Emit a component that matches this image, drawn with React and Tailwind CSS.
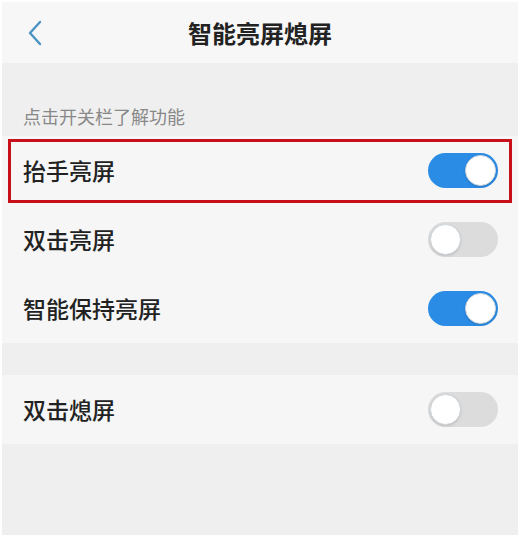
import React from 'react';

const Toggle = ({ on }) => (
  <div
    className={`w-[70px] h-[35px] rounded-full p-[2px] flex items-center ${
      on ? 'bg-[#2b8ce6] justify-end' : 'bg-[#dcdcdc] justify-start'
    }`}
  >
    <div className="w-[31px] h-[31px] rounded-full bg-white border border-[#cfd6dc] shadow-sm" />
  </div>
);

const Row = ({ label, on, highlight }) => (
  <div className="h-[69px] flex items-center px-[6px] bg-[#f5f6f5]">
    <div
      className={`flex-1 h-[64px] flex items-center justify-between pl-[12px] pr-[11px] ${
        highlight ? 'border-[3px] border-[#c8101b]' : 'border-[3px] border-transparent'
      }`}
    >
      <span className="text-[23px] font-medium text-[#222]">{label}</span>
      <Toggle on={on} />
    </div>
  </div>
);

export default function App() {
  return (
    <div
      className="w-[520px] h-[537px] bg-white p-[2px] flex flex-col"
      style={{ fontFamily: '"Noto Sans CJK SC", "Noto Sans", sans-serif' }}
    >
      <div className="flex-1 flex flex-col bg-[#efefef]">
        {/* Header */}
        <div className="h-[61px] bg-[#f7f7f7] flex items-center relative">
          <svg className="absolute left-[23px] top-[16px]" width="20" height="30" viewBox="0 0 20 30">
            <path d="M15 4 L5 15 L15 26" fill="none" stroke="#4b93c3" strokeWidth="2.4" strokeLinecap="round" strokeLinejoin="round" />
          </svg>
          <h1 className="flex-1 text-center text-[24px] font-bold text-[#222]">智能亮屏熄屏</h1>
        </div>

        {/* Section label */}
        <div className="h-[73px] flex items-end pb-[6px] pl-[21px]">
          <span className="text-[18px] text-[#888]">点击开关栏了解功能</span>
        </div>

        <Row label="抬手亮屏" on highlight />
        <Row label="双击亮屏" on={false} />
        <Row label="智能保持亮屏" on />

        <div className="h-[32px]" />

        <Row label="双击熄屏" on={false} />
      </div>
    </div>
  );
}
